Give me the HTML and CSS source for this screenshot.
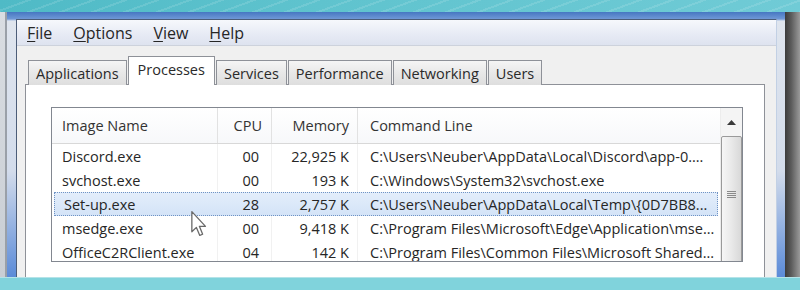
FILE: index.html
```html
<!DOCTYPE html>
<html lang="en">
<head>
    <meta charset="UTF-8">
    <title>Windows Task Manager - Processes</title>
    <link rel="stylesheet" href="styles.css">
</head>
<body>
    <div class="screen">
        <div class="sky"></div>

        <div class="desk">
            <div class="desk-edge"></div>
            <div class="frame">
                <div class="window">
                    <div class="menubar">
                        <span class="menu"><u>F</u>ile</span>
                        <span class="menu"><u>O</u>ptions</span>
                        <span class="menu"><u>V</u>iew</span>
                        <span class="menu"><u>H</u>elp</span>
                    </div>

                    <div class="client">
                        <div class="tabs">
                            <div class="tab">Applications</div>
                            <div class="tab active">Processes</div>
                            <div class="tab">Services</div>
                            <div class="tab">Performance</div>
                            <div class="tab">Networking</div>
                            <div class="tab">Users</div>
                        </div>

                        <div class="panel">
                            <div class="listbox">
                                <div class="table">
                                    <div class="row head">
                                        <div class="cell name">Image Name</div>
                                        <div class="cell num">CPU</div>
                                        <div class="cell mem">Memory</div>
                                        <div class="cell cmd">Command Line</div>
                                    </div>
                                    <div class="row">
                                        <div class="cell name">Discord.exe</div>
                                        <div class="cell num">00</div>
                                        <div class="cell mem">22,925 K</div>
                                        <div class="cell cmd">C:\Users\Neuber\AppData\Local\Discord\app-0....</div>
                                    </div>
                                    <div class="row">
                                        <div class="cell name">svchost.exe</div>
                                        <div class="cell num">00</div>
                                        <div class="cell mem">193 K</div>
                                        <div class="cell cmd">C:\Windows\System32\svchost.exe</div>
                                    </div>
                                    <div class="row selected">
                                        <div class="cell name">Set-up.exe</div>
                                        <div class="cell num">28</div>
                                        <div class="cell mem">2,757 K</div>
                                        <div class="cell cmd">C:\Users\Neuber\AppData\Local\Temp\{0D7BB8...</div>
                                    </div>
                                    <div class="row">
                                        <div class="cell name">msedge.exe</div>
                                        <div class="cell num">00</div>
                                        <div class="cell mem">9,418 K</div>
                                        <div class="cell cmd">C:\Program Files\Microsoft\Edge\Application\mse...</div>
                                    </div>
                                    <div class="row">
                                        <div class="cell name">OfficeC2RClient.exe</div>
                                        <div class="cell num">04</div>
                                        <div class="cell mem">142 K</div>
                                        <div class="cell cmd">C:\Program Files\Common Files\Microsoft Shared...</div>
                                    </div>
                                </div>

                                <div class="scrollbar">
                                    <div class="scroll-up">
                                        <svg width="9" height="5" viewBox="0 0 9 5">
                                            <path d="M0 5 L4.5 0 L9 5 Z" fill="#3a3a3a"></path>
                                        </svg>
                                    </div>
                                    <div class="thumb">
                                        <span class="grip"></span>
                                    </div>
                                </div>
                            </div>
                        </div>
                    </div>
                </div>
            </div>
            <div class="shadow"></div>
        </div>

        <div class="sea"></div>

        <!-- mouse pointer over the selected row -->
        <svg class="cursor" width="16" height="26" viewBox="0 0 12 20">
            <path d="M0.5 0.5 L0.5 16 L4 12.6 L6.6 18.8 L8.8 17.9 L6.3 11.8 L11 11.8 Z" fill="#ffffff" stroke="#6a6a6a" stroke-width="1" stroke-linejoin="round"></path>
        </svg>
    </div>
</body>
</html>
```

FILE: styles.css
```css
* {
    margin: 0;
    padding: 0;
    box-sizing: border-box;
}

body {
    width: 800px;
    height: 290px;
    overflow: hidden;
    background-color: #7fd2dc;
    font-family: 'Open Sans', 'Noto Sans', sans-serif;
    color: #262626;
}

.screen {
    position: relative;
    width: 800px;
    height: 290px;
    display: flex;
    flex-direction: column;
    overflow: hidden;
}

/* desktop wallpaper strips */
.sky {
    height: 12px;
    flex-shrink: 0;
    background:
        repeating-linear-gradient(160deg, rgba(255, 255, 255, 0) 0 9px, rgba(255, 255, 255, 0.12) 9px 11px),
        linear-gradient(90deg, #4fbac6, #5fc3ce 40%, #70cbd6);
}

.sea {
    height: 13px;
    flex-shrink: 0;
    background-color: #80d3dc;
    border-top: 1px solid #b5e3e8;
}

.desk {
    height: 265px;
    display: flex;
    overflow: hidden;
}

.desk-edge {
    width: 5px;
    background: linear-gradient(180deg, #d9dde2, #c9ced4);
}

.frame {
    flex: 1;
    display: flex;
    align-items: flex-start;
    padding: 7px 8px 0 9px;
    border-left: 2px solid #9aa0a8;
    background: linear-gradient(180deg, #4677c2 0, #6f98d6 7px, #dfe5ee 9px, #d3dceb 60%, #5b8bd8 100%);
}

.shadow {
    width: 15px;
    background: linear-gradient(90deg, #3c3c3c, #5a5a5a 40%, #9a9a9a);
}

.window {
    flex: 1;
    height: 280px;
    display: flex;
    flex-direction: column;
    background-color: #f0f0f0;
    border-top: 1px solid #4c5d78;
    border-left: 1px solid #4c5d78;
    border-right: 1px solid #c2d0e4;
}

.menubar {
    height: 26px;
    display: flex;
    align-items: center;
    gap: 21px;
    padding-left: 10px;
    background: linear-gradient(180deg, #f6f8fc, #e6eaf4 60%, #dee3ef);
    border-bottom: 1px solid #cdd2dc;
    font-size: 16px;
}

.menu u {
    text-underline-offset: 2px;
}

.client {
    flex: 1;
    display: flex;
    flex-direction: column;
    padding: 10px 11px 0 8px;
}

.tabs {
    display: flex;
    align-items: flex-end;
    gap: 1px;
    height: 29px;
    padding-left: 3px;
    margin-bottom: -1px;
    position: relative;
    z-index: 1;
    font-size: 14.5px;
}

.tab {
    height: 25px;
    display: flex;
    align-items: center;
    padding: 0 7px;
    background: linear-gradient(180deg, #f5f5f5, #e8e8e8 50%, #dedede);
    border: 1px solid #8e9198;
    border-bottom: none;
    color: #2a2a2a;
}

.tab.active {
    height: 29px;
    padding: 0 9px 4px 9px;
    background: #fff;
}

.panel {
    flex: 1;
    background-color: #fff;
    border: 1px solid #8e9198;
    padding: 22px 21px 0 25px;
}

.listbox {
    height: 155px;
    display: flex;
    border: 1px solid #828790;
    overflow: hidden;
}

.table {
    flex: 1;
    font-size: 14.5px;
}

.row {
    display: grid;
    grid-template-columns: 166px 54px 86px 1fr;
    height: 24px;
    align-items: center;
}

.row .cell {
    height: 100%;
    display: flex;
    align-items: center;
    white-space: nowrap;
    overflow: hidden;
    border-right: 1px solid #f1f1f1;
}

.row .cell:last-child {
    border-right: none;
}

.row.head {
    height: 36px;
    background: linear-gradient(180deg, #ffffff, #f7f8fa);
    border-bottom: 1px solid #d8d8d8;
    color: #333;
}

.row.head .cell {
    border-right: 1px solid #e2e2e2;
}

.row.head .cell:last-child {
    border-right: none;
}

.cell.name {
    padding-left: 10px;
}

.cell.num {
    justify-content: flex-end;
    padding-right: 12px;
}

.row.head .cell.num {
    padding-right: 9px;
}

.cell.mem {
    justify-content: flex-end;
    padding-right: 8px;
}

.cell.cmd {
    padding-left: 12px;
}

.row.selected {
    margin: 0 2px;
    grid-template-columns: 164px 54px 86px 1fr;
    background: linear-gradient(180deg, #e4eefb, #d3e3f7);
    outline: 1px dotted #6f93c4;
    outline-offset: -1px;
}

.row.selected .cell {
    border-right-color: transparent;
}

.scrollbar {
    width: 22px;
    display: flex;
    flex-direction: column;
    background-color: #f4f4f4;
    border-left: 1px solid #ececec;
}

.scroll-up {
    height: 28px;
    display: flex;
    align-items: center;
    justify-content: center;
}

.thumb {
    flex: 1;
    margin: 0 0 -2px 0;
    display: flex;
    align-items: center;
    justify-content: center;
    border: 1px solid #9a9a9a;
    border-radius: 2px;
    background: linear-gradient(90deg, #f6f6f6, #e9e9e9 50%, #d8d8d8);
}

.grip {
    width: 9px;
    height: 7px;
    background: repeating-linear-gradient(180deg, #8a8a8a 0 1px, transparent 1px 2px);
    margin-bottom: 10px;
}

.cursor {
    position: absolute;
    left: 191px;
    top: 211px;
}
```
